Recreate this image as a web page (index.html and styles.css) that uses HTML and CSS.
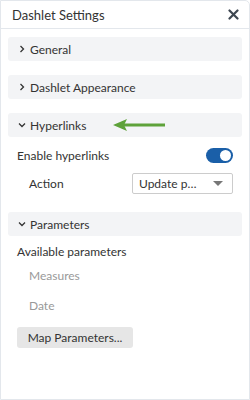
FILE: index.html
```html
<!DOCTYPE html>
<html lang="en">
<head>
    <meta charset="UTF-8">
    <title>Dashlet Settings</title>
    <link rel="stylesheet" href="styles.css">
</head>
<body>
    <div class="panel">
        <div class="panel-header">
            <span class="panel-title">Dashlet Settings</span>
            <svg class="close" width="11" height="11" viewBox="0 0 11 11">
                <path d="M1.5 1.5 L9.5 9.5 M9.5 1.5 L1.5 9.5" stroke="#3d4650" stroke-width="2.2" stroke-linecap="round"/>
            </svg>
        </div>

        <div class="panel-body">
            <div class="section-head">
                <svg class="chev" width="8" height="8" viewBox="0 0 8 8"><path d="M2.5 1 L5.5 4 L2.5 7" fill="none" stroke="#333" stroke-width="1.3"/></svg>
                <span>General</span>
            </div>

            <div class="section-head">
                <svg class="chev" width="8" height="8" viewBox="0 0 8 8"><path d="M2.5 1 L5.5 4 L2.5 7" fill="none" stroke="#333" stroke-width="1.3"/></svg>
                <span>Dashlet Appearance</span>
            </div>

            <div class="section-head">
                <svg class="chev" width="8" height="8" viewBox="0 0 8 8"><path d="M1 2.5 L4 5.5 L7 2.5" fill="none" stroke="#333" stroke-width="1.3"/></svg>
                <span>Hyperlinks</span>
                <svg class="pointer" width="52" height="14" viewBox="0 0 52 14">
                    <path d="M10 7 L52 7" stroke="#5ea23a" stroke-width="3"/>
                    <path d="M0 7 L14 1 L11 7 L14 13 Z" fill="#5ea23a"/>
                </svg>
            </div>
            <div class="section-content">
                <div class="row">
                    <span>Enable hyperlinks</span>
                    <span class="toggle"><span class="knob"></span></span>
                </div>
                <div class="row sub">
                    <span>Action</span>
                    <div class="select">
                        <span>Update p…</span>
                        <span class="caret"></span>
                    </div>
                </div>
            </div>

            <div class="section-head params">
                <svg class="chev" width="8" height="8" viewBox="0 0 8 8"><path d="M1 2.5 L4 5.5 L7 2.5" fill="none" stroke="#333" stroke-width="1.3"/></svg>
                <span>Parameters</span>
            </div>
            <div class="section-content">
                <div class="label">Available parameters</div>
                <div class="param">Measures</div>
                <div class="param">Date</div>
                <button class="map-btn">Map Parameters...</button>
            </div>
        </div>
    </div>
</body>
</html>
```

FILE: styles.css
```css
body {
    margin: 0;
    font-family: Lato, "Noto Sans", sans-serif;
    color: #333;
    background: #fff;
}
.panel {
    width: 250px;
    height: 400px;
    box-sizing: border-box;
    border: 1px solid #e3e7ec;
    border-top-right-radius: 5px;
    overflow: hidden;
}
.panel-header {
    height: 28px;
    box-sizing: border-box;
    border-bottom: 1px solid #e3e7ec;
    display: flex;
    align-items: center;
    justify-content: space-between;
    padding: 0 10px 0 11px;
}
.panel-title {
    font-size: 13px;
    color: #333;
}
.panel-body {
    padding: 8px 7px;
}
.section-head {
    height: 24px;
    background: #f3f4f6;
    border-radius: 3px;
    display: flex;
    align-items: center;
    padding-left: 10px;
    font-size: 12px;
    margin-bottom: 14px;
}
.chev {
    margin-right: 4px;
}
.pointer {
    margin-left: 27px;
}
.section-content {
    padding: 0 9px;
    font-size: 12px;
    margin-top: -7px;
}
.row {
    display: flex;
    align-items: center;
    justify-content: space-between;
    height: 22px;
}
.row.sub {
    padding-left: 12px;
    margin-top: 6px;
}
.toggle {
    width: 27px;
    height: 15px;
    border-radius: 8px;
    background: #1a5fa8;
    position: relative;
}
.knob {
    position: absolute;
    right: 2px;
    top: 2px;
    width: 11px;
    height: 11px;
    border-radius: 50%;
    background: #fff;
}
.select {
    width: 101px;
    height: 21px;
    box-sizing: border-box;
    border: 1px solid #ccc;
    border-radius: 2px;
    display: flex;
    align-items: center;
    justify-content: space-between;
    padding: 0 9px 0 6px;
}
.caret {
    width: 0;
    height: 0;
    border-left: 5px solid transparent;
    border-right: 5px solid transparent;
    border-top: 5px solid #777;
}
.params {
    margin-top: 18px;
}
.label {
    height: 18px;
    line-height: 18px;
}
.param {
    color: #999;
    padding-left: 12px;
    height: 30px;
    line-height: 30px;
}
.map-btn {
    margin-top: 6px;
    font-family: inherit;
    font-size: 12px;
    color: #333;
    background: #e6e6e6;
    border: none;
    border-radius: 3px;
    height: 21px;
    width: 116px;
    padding: 0;
}
```
